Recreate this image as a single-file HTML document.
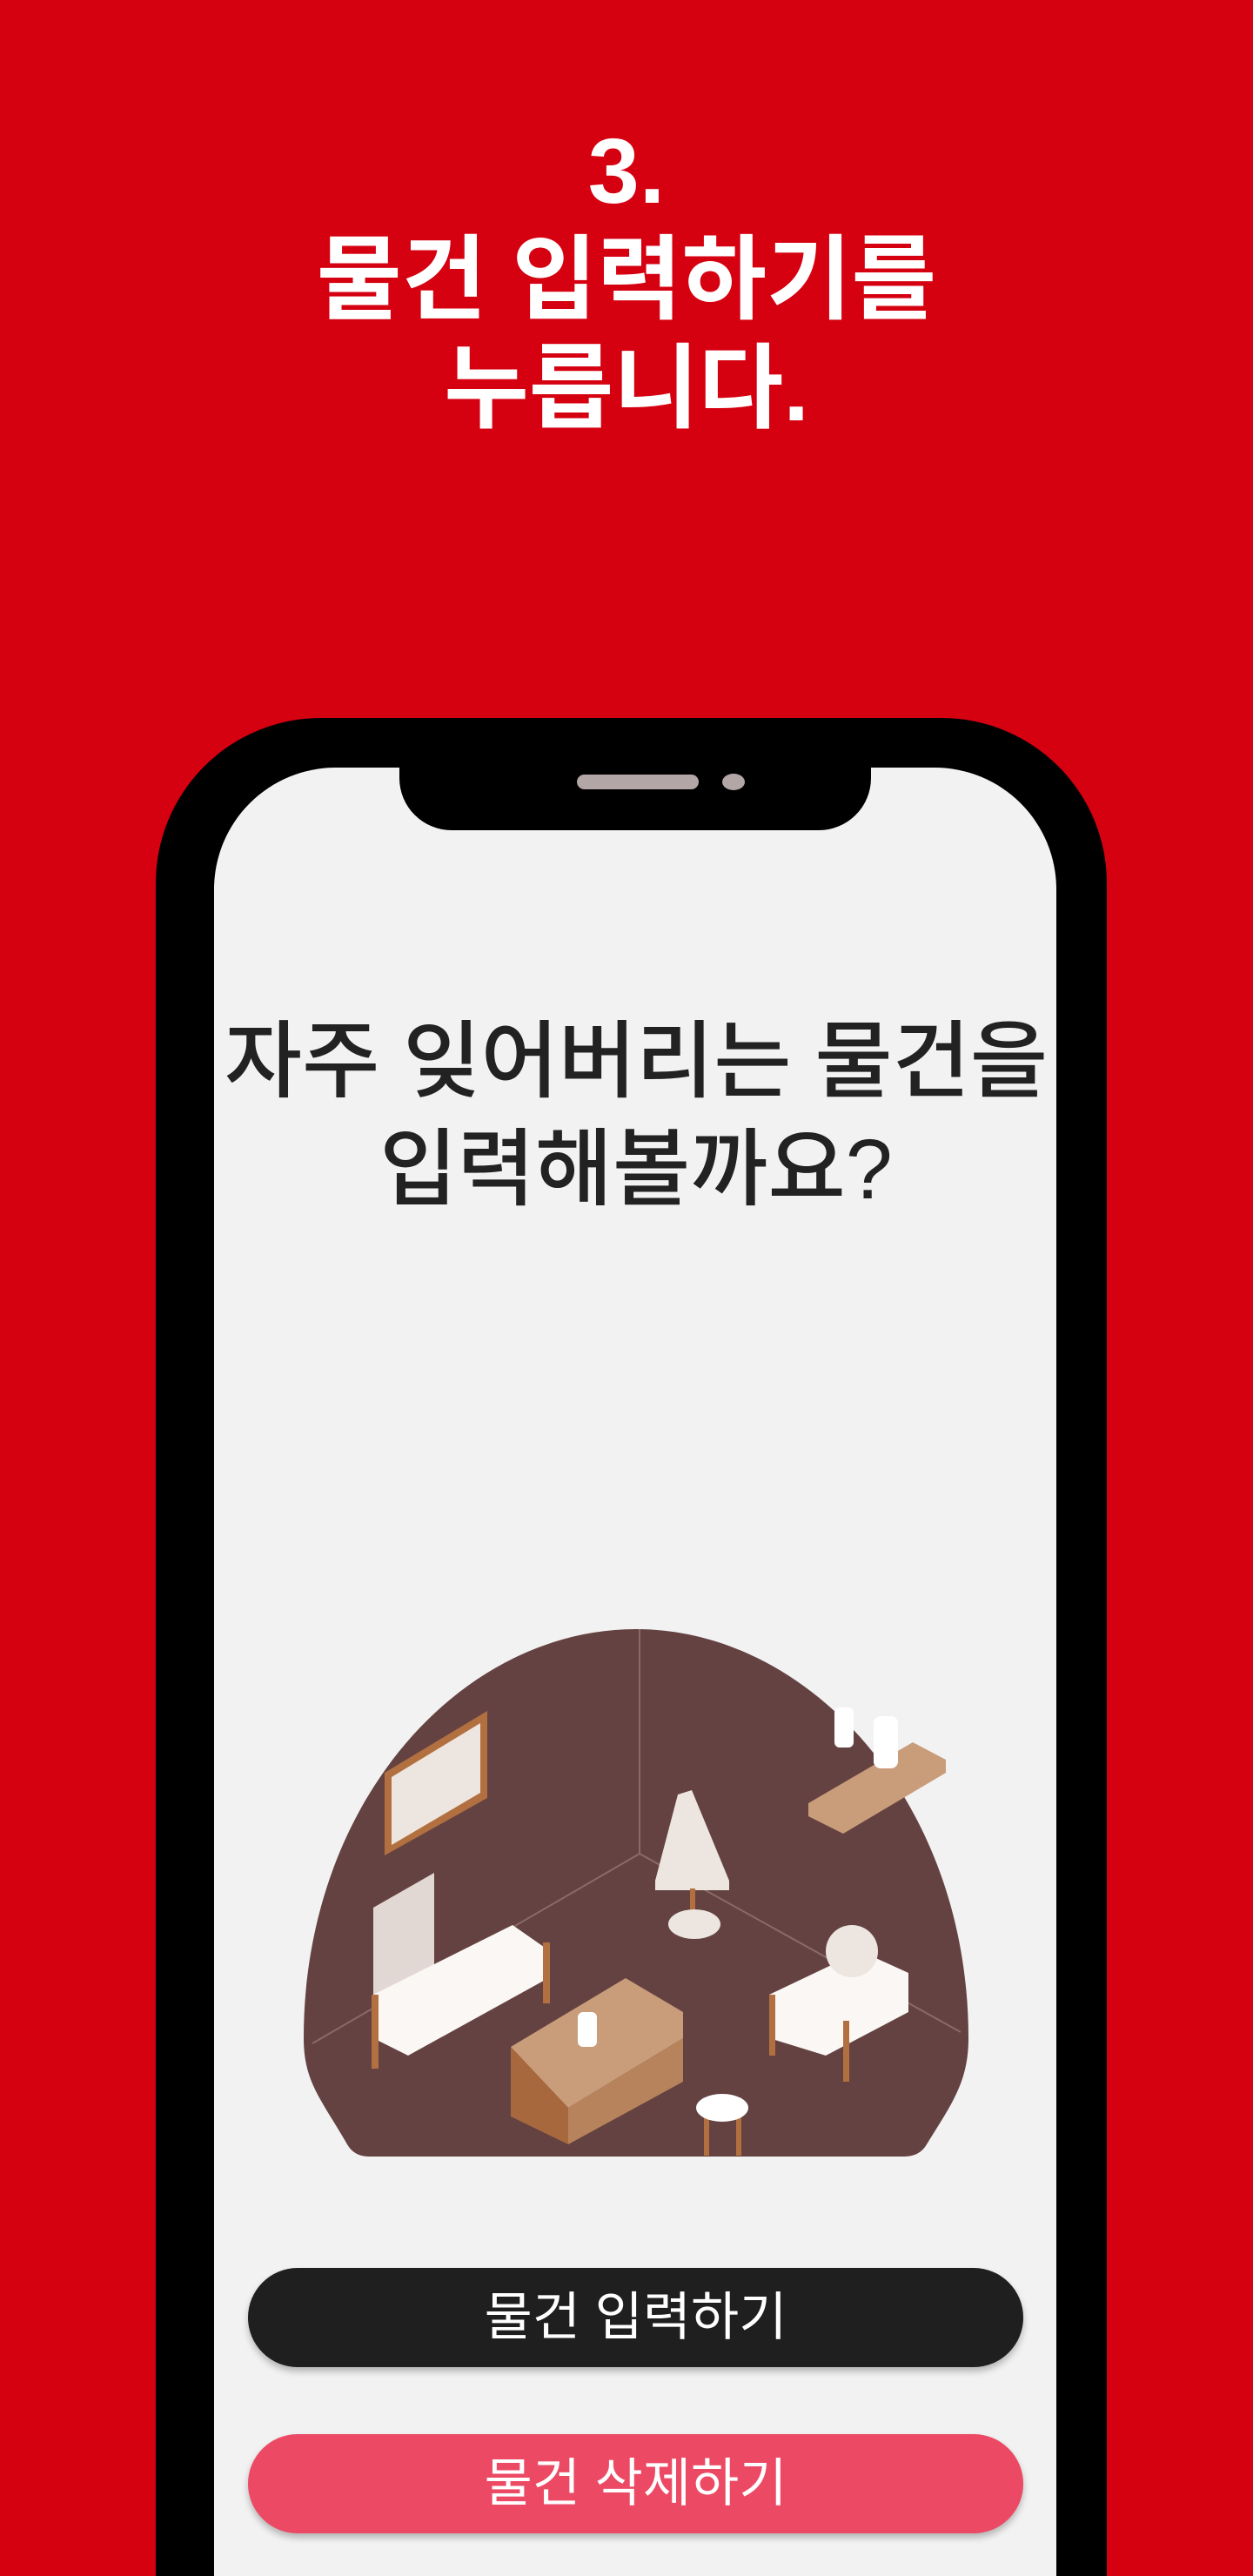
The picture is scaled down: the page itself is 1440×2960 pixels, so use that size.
<!DOCTYPE html>
<html><head><meta charset="utf-8">
<style>
html,body{margin:0;padding:0;overflow:hidden;height:2960px}
body{width:1440px;background:#d50010;font-family:"Liberation Sans","Noto Sans CJK KR",sans-serif}
.wrap{position:relative;width:1440px;height:2960px;overflow:hidden;background:#d50010}
.title{position:absolute;left:0;width:1440px;text-align:center;color:#fff;font-weight:bold;font-size:106px;line-height:125px;top:135px}
.phone{position:absolute;left:179px;top:825px;width:1093px;height:2135px;background:#000;border-radius:190px 190px 0 0}
.screen{position:absolute;left:246px;top:882px;width:968px;height:2078px;background:#f2f2f2;border-radius:140px 140px 0 0}
.notch{position:absolute;left:459px;top:870px;width:542px;height:84px;background:#000;border-radius:0 0 60px 60px}
.spk{position:absolute;left:663px;top:890px;width:140px;height:17px;background:#b3a6a6;border-radius:9px}
.cam{position:absolute;left:830px;top:889px;width:26px;height:19px;background:#b3a6a6;border-radius:50%}
.q{position:absolute;left:247px;width:968px;text-align:center;color:#222;font-size:97px;font-weight:500;line-height:124px;top:1158px;white-space:nowrap}
.btn{position:absolute;left:285px;width:891px;height:114px;border-radius:57px;color:#fff;text-align:center;font-size:60px;line-height:114px;box-shadow:0 5px 8px rgba(0,0,0,.25)}
</style></head><body><div class="wrap">
<div class="title">3.<br>물건 입력하기를<br>누릅니다.</div>
<div class="phone"></div>
<div class="screen"></div>
<div class="notch"></div>
<div class="spk"></div>
<div class="cam"></div>
<div class="q">자주 잊어버리는 물건을<br>입력해볼까요?</div>
<svg style="position:absolute;left:349px;top:1872px" width="764" height="606" viewBox="0 0 764 606">
<path d="M75,606 Q58,606 50,592 C20,540 0,520 0,470 C0,200 180,0 382,0 C582,0 764,200 764,470 C764,520 745,545 716,592 Q708,606 690,606 Z" fill="#644241"/>
<g stroke="#8a6a66" stroke-width="2" fill="none"><path d="M386,0 V258 L10,476 M386,258 L755,463"/></g>
<polygon points="93,165 211,94 211,194 93,260" fill="#b27040"/>
<polygon points="101,170 203,108 203,188 101,248" fill="#ede6e0"/>
<polygon points="404,289 430,190 446,185 489,289 489,300 404,300" fill="#ede6e0"/>
<rect x="444" y="298" width="6" height="40" fill="#b27040"/>
<ellipse cx="449" cy="339" rx="30" ry="17" fill="#ede6e0"/>
<polygon points="580,200 700,130 738,150 738,165 620,235 580,215" fill="#c99c7a"/>
<rect x="655" y="100" width="28" height="60" rx="8" fill="#fff"/>
<rect x="610" y="90" width="22" height="46" rx="6" fill="#fff"/>
<polygon points="80,320 150,280 150,400 80,440" fill="#e2d8d3"/>
<polygon points="80,420 240,340 283,370 283,400 120,490 80,470" fill="#faf7f5"/>
<rect x="78" y="420" width="8" height="85" fill="#b27040"/>
<rect x="275" y="360" width="8" height="70" fill="#b27040"/>
<polygon points="238,480 370,401 436,440 436,470 304,550" fill="#c99c7a"/>
<polygon points="238,480 304,550 304,592 238,560" fill="#a8683e"/>
<polygon points="304,550 436,470 436,520 304,592" fill="#b7835c"/>
<rect x="315" y="440" width="22" height="40" rx="6" fill="#fff"/>
<polygon points="535,420 640,370 695,395 695,440 600,490 535,470" fill="#faf7f5"/>
<rect x="600" y="340" width="60" height="60" rx="30" fill="#ede6e0"/>
<rect x="535" y="420" width="7" height="70" fill="#b27040"/>
<rect x="620" y="450" width="7" height="70" fill="#b27040"/>
<rect x="460" y="555" width="6" height="50" fill="#b27040"/>
<rect x="497" y="555" width="6" height="50" fill="#b27040"/>
<ellipse cx="481" cy="550" rx="30" ry="16" fill="#fff"/>
</svg>
<div class="btn" style="top:2606px;background:#1f1f1f">물건 입력하기</div>
<div class="btn" style="top:2797px;background:#ec4964">물건 삭제하기</div>
</div></body></html>
